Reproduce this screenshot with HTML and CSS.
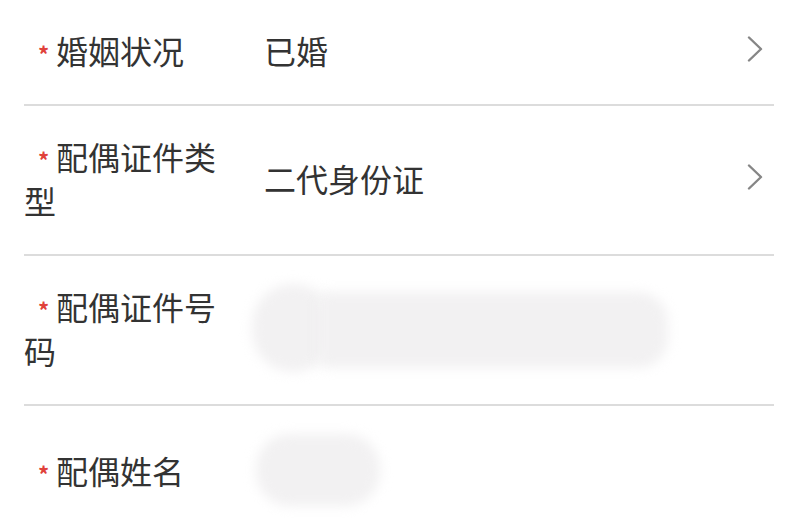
FILE: index.html
```html
<!DOCTYPE html>
<html lang="zh-CN">
<head>
<meta charset="utf-8">
<link rel="stylesheet" href="styles.css">
</head>
<body>
<div class="form">
  <div class="row">
    <div class="label"><span class="req">*</span>婚姻状况</div>
    <div class="value">已婚</div>
    <svg class="chev" width="16" height="26" viewBox="0 0 16 26"><polyline points="2,1.5 14,13 2,24.5" fill="none" stroke="#868686" stroke-width="2.4" stroke-linecap="round" stroke-linejoin="round"/></svg>
  </div>
  <div class="row">
    <div class="label"><span class="req">*</span>配偶证件类型</div>
    <div class="value">二代身份证</div>
    <svg class="chev" width="16" height="26" viewBox="0 0 16 26"><polyline points="2,1.5 14,13 2,24.5" fill="none" stroke="#868686" stroke-width="2.4" stroke-linecap="round" stroke-linejoin="round"/></svg>
  </div>
  <div class="row">
    <div class="label"><span class="req">*</span>配偶证件号码</div>
    <div class="value">
      <div class="blur blur-head"></div>
      <div class="blur blur-body"></div>
    </div>
  </div>
  <div class="row">
    <div class="label"><span class="req">*</span>配偶姓名</div>
    <div class="value"><div class="blur blur-short"></div></div>
  </div>
</div>
</body>
</html>
```
FILE: styles.css
```css
html, body {
  margin: 0;
  padding: 0;
  background: #ffffff;
  overflow: hidden;
}
body {
  font-family: "Noto Sans CJK SC", "Noto Sans", sans-serif;
  color: #333333;
}
.form {
  margin: 0 25px 0 24px;
}
.row {
  display: flex;
  align-items: center;
  padding: 28px 0 32px;
  border-bottom: 2px solid #dcdcdc;
}
.label {
  width: 208px;
  flex: none;
  font-size: 32px;
  line-height: 44px;
  color: #333;
}
.req {
  display: inline-block;
  color: #e0413a;
  font-size: 22px;
  font-weight: bold;
  line-height: 0;
  width: 16px;
  margin-left: 14px;
  margin-right: 2px;
  vertical-align: 1px;
}
.value {
  flex: 1;
  margin-left: 32px;
  font-size: 32px;
  line-height: 44px;
  color: #333;
  display: flex;
  align-items: center;
}
.chev {
  flex: none;
  margin-right: 11px;
  margin-top: -2px;
}
.blur {
  background: #f2f1f2;
  filter: blur(6px);
  flex: none;
}
.blur-head {
  width: 82px;
  height: 88px;
  margin-left: -12px;
  border-radius: 41px;
}
.blur-body {
  width: 350px;
  height: 76px;
  margin-left: -16px;
  margin-top: 4px;
  border-radius: 10px 30px 30px 10px;
}
.blur-short {
  width: 124px;
  height: 72px;
  margin-left: -8px;
  border-radius: 34px;
}
```
